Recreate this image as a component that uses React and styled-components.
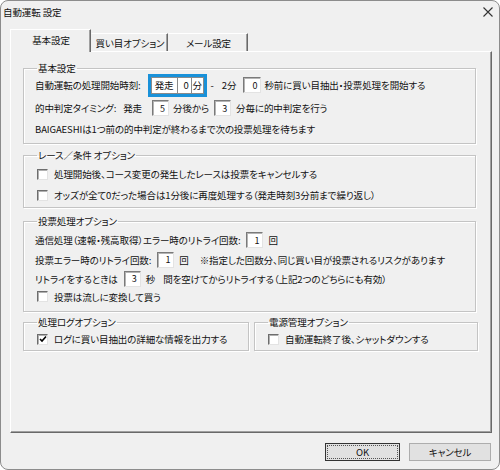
import React from 'react'
import styled, { createGlobalStyle } from 'styled-components'

const GlobalStyle = createGlobalStyle`
  html, body { margin:0; padding:0; background:#ffffff; }
  body {
    font-family:"Noto Sans CJK JP", "Noto Sans", sans-serif;
    font-size:9.5px;
    font-feature-settings:"palt";
    letter-spacing:-0.1px;
    color:#111;
  }
`

const Window = styled.div`
  width:500px; height:470px;
  box-sizing:border-box;
  background:#f0f0f0;
  border:1px solid #8c8c8c;
  border-radius:8px;
  display:flex; flex-direction:column;
  overflow:hidden;
`
const TitleBar = styled.div`
  height:22px;
  display:flex; align-items:center; justify-content:space-between;
  padding:0 6px 0 2px;
`
const Body = styled.div`
  padding:0 7px 0 9px;
  display:flex; flex-direction:column;
`
const TabRow = styled.div`
  display:flex; align-items:flex-end;
  margin-top:5px;
  height:23px;
  position:relative; z-index:2;
`
const Tab = styled.div`
  box-sizing:border-box;
  width:${p => p.w}px;
  height:${p => (p.active ? 23 : 18)}px;
  display:flex; align-items:center; justify-content:center;
  background:#f0f0f0;
  border-top:1px solid #ffffff;
  border-left:1px solid ${p => (p.active ? '#ffffff' : 'transparent')};
  border-right:1px solid #696969;
  box-shadow:inset -1px 0 0 #a0a0a0;
  margin-bottom:${p => (p.active ? '-1px' : '0')};
  padding:0 0 ${p => (p.active ? '2px' : '0')} 1px;
  white-space:nowrap;
`
const Panel = styled.div`
  box-sizing:border-box;
  height:382px;
  border-top:1px solid #ffffff;
  border-left:1px solid #ffffff;
  border-right:1px solid #696969;
  border-bottom:1px solid #696969;
  box-shadow:inset -1px -1px 0 #a0a0a0;
  padding:10px 15px 0 12px;
  display:flex; flex-direction:column;
`
const Group = styled.fieldset`
  margin:${p => p.mt || 0}px 0 0 0;
  padding:${p => p.pt || 0}px 0 ${p => p.pb || 0}px 11px;
  min-width:0;
  border:1px solid #c4c4c4;
  box-shadow:1px 1px 0 #ffffff, inset 1px 1px 0 #ffffff;
  border-radius:0;
`
const Legend = styled.legend`
  padding:0 1px;
  margin-left:2px;
  line-height:12px;
`
const Row = styled.div`
  display:flex; align-items:center;
  height:${p => p.h || 20}px;
  white-space:nowrap;
`
const Txt = styled.span`
  margin-left:${p => p.ml || 0}px;
  line-height:14px;
`
const NumBox = styled.span`
  box-sizing:border-box;
  display:inline-flex; align-items:center; justify-content:flex-end;
  width:${p => p.w || 17}px; height:16px;
  margin-left:${p => p.ml || 0}px;
  padding-right:3px;
  background:#ffffff;
  border:1px solid;
  border-color:#7a7a7a #e3e3e3 #e3e3e3 #7a7a7a;
  box-shadow:inset 1px 1px 0 #b4b4b4;
  font-size:9px;
`
const BlueFrame = styled.span`
  display:inline-flex;
  margin-left:${p => p.ml || 0}px;
  border:3px solid #1991d9;
`
const Picker = styled.span`
  display:inline-flex; align-items:stretch;
  height:15px;
  background:#ffffff;
  border:1px solid #8a8a8a;
`
const Seg = styled.span`
  box-sizing:border-box;
  display:inline-flex; align-items:center; justify-content:${p => (p.right ? 'flex-end' : 'center')};
  width:${p => p.w}px;
  padding:0 ${p => p.px || 0}px;
  border-left:${p => (p.line ? '1px solid #8a8a8a' : 'none')};
`
const Check = styled.span`
  box-sizing:border-box;
  width:11px; height:11px;
  margin-left:2px;
  background:#ffffff;
  border:1px solid;
  border-color:#6d6d6d #e3e3e3 #e3e3e3 #6d6d6d;
  box-shadow:inset 1px 1px 0 #b0b0b0;
  display:inline-flex; align-items:center; justify-content:center;
`
const TwoCols = styled.div`
  display:grid; grid-template-columns:226px 224px; column-gap:5px;
  margin-top:${p => p.mt || 0}px;
`
const Buttons = styled.div`
  display:flex; justify-content:flex-end; gap:9px;
  margin-top:10px;
  padding-right:1px;
`
const Button = styled.div`
  box-sizing:border-box;
  width:${p => p.w}px; height:18px;
  display:flex; align-items:center; justify-content:center;
  background:#e1e1e1;
  border:1px solid ${p => (p.focus ? '#333333' : '#adadad')};
  outline:${p => (p.focus ? '1px dotted #555' : 'none')};
  outline-offset:-3px;
`

const CloseIcon = () => (
  <svg width="10" height="10" viewBox="0 0 10 10">
    <path d="M0.5 0.5 L9.5 9.5 M9.5 0.5 L0.5 9.5" stroke="#333" strokeWidth="1.1" />
  </svg>
)

const CheckMark = () => (
  <svg width="8" height="8" viewBox="0 0 8 8">
    <polyline points="1,4 3,6 7,1.5" fill="none" stroke="#000" strokeWidth="1.6" />
  </svg>
)

const CheckRow = ({ checked, children, h }) => (
  <Row h={h}>
    <Check>{checked && <CheckMark />}</Check>
    <Txt ml={6}>{children}</Txt>
  </Row>
)

export default function App() {
  return (
    <>
      <GlobalStyle />
      <Window>
        <TitleBar>
          <span>自動運転 設定</span>
          <CloseIcon />
        </TitleBar>
        <Body>
          <TabRow>
            <Tab active w={81}>基本設定</Tab>
            <Tab w={77}>買い目オプション</Tab>
            <Tab w={80}>メール設定</Tab>
          </TabRow>
          <Panel>
            <Group pb={5}>
              <Legend>基本設定</Legend>
              <Row h={22}>
                <Txt>自動運転の処理開始時刻:</Txt>
                <BlueFrame ml={7}>
                  <Picker>
                    <Seg w={25}>発走</Seg>
                    <Seg w={14} right line px={2}>0</Seg>
                    <Seg w={12} line>分</Seg>
                  </Picker>
                </BlueFrame>
                <Txt ml={4}>-</Txt>
                <Txt ml={8}>2分</Txt>
                <NumBox ml={7} w={18}>0</NumBox>
                <Txt ml={3}>秒前に買い目抽出・投票処理を開始する</Txt>
              </Row>
              <Row h={24}>
                <Txt>的中判定タイミング:</Txt>
                <Txt ml={7}>発走</Txt>
                <NumBox ml={10}>5</NumBox>
                <Txt ml={4}>分後から</Txt>
                <NumBox ml={5}>3</NumBox>
                <Txt ml={5}>分毎に的中判定を行う</Txt>
              </Row>
              <Row h={18}>
                <Txt>BAIGAESHIは1つ前の的中判定が終わるまで次の投票処理を待ちます</Txt>
              </Row>
            </Group>

            <Group mt={5} pt={2} pb={2}>
              <Legend>レース／条件 オプション</Legend>
              <CheckRow h={22}>処理開始後、コース変更の発生したレースは投票をキャンセルする</CheckRow>
              <CheckRow h={20}>オッズが全て0だった場合は1分後に再度処理する（発走時刻3分前まで繰り返し）</CheckRow>
            </Group>

            <Group mt={7} pt={3} pb={6}>
              <Legend>投票処理オプション</Legend>
              <Row h={20}>
                <Txt>通信処理（速報・残高取得）エラー時のリトライ回数:</Txt>
                <NumBox ml={6}>1</NumBox>
                <Txt ml={5}>回</Txt>
              </Row>
              <Row h={19}>
                <Txt>投票エラー時のリトライ回数:</Txt>
                <NumBox ml={6}>1</NumBox>
                <Txt ml={5}>回</Txt>
                <Txt ml={11}>※指定した回数分、同じ買い目が投票されるリスクがあります</Txt>
              </Row>
              <Row h={19}>
                <Txt>リトライをするときは</Txt>
                <NumBox ml={6}>3</NumBox>
                <Txt ml={5}>秒</Txt>
                <Txt ml={8}>間を空けてからリトライする（上記2つのどちらにも有効）</Txt>
              </Row>
              <CheckRow h={17}>投票は流しに変換して買う</CheckRow>
            </Group>

            <TwoCols mt={4}>
              <Group pt={1} pb={1}>
                <Legend>処理ログオプション</Legend>
                <CheckRow h={20} checked>ログに買い目抽出の詳細な情報を出力する</CheckRow>
              </Group>
              <Group pt={1} pb={1}>
                <Legend>電源管理オプション</Legend>
                <CheckRow h={20}>自動運転終了後、シャットダウンする</CheckRow>
              </Group>
            </TwoCols>
          </Panel>
          <Buttons>
            <Button w={75} focus>OK</Button>
            <Button w={82}>キャンセル</Button>
          </Buttons>
        </Body>
      </Window>
    </>
  )
}
